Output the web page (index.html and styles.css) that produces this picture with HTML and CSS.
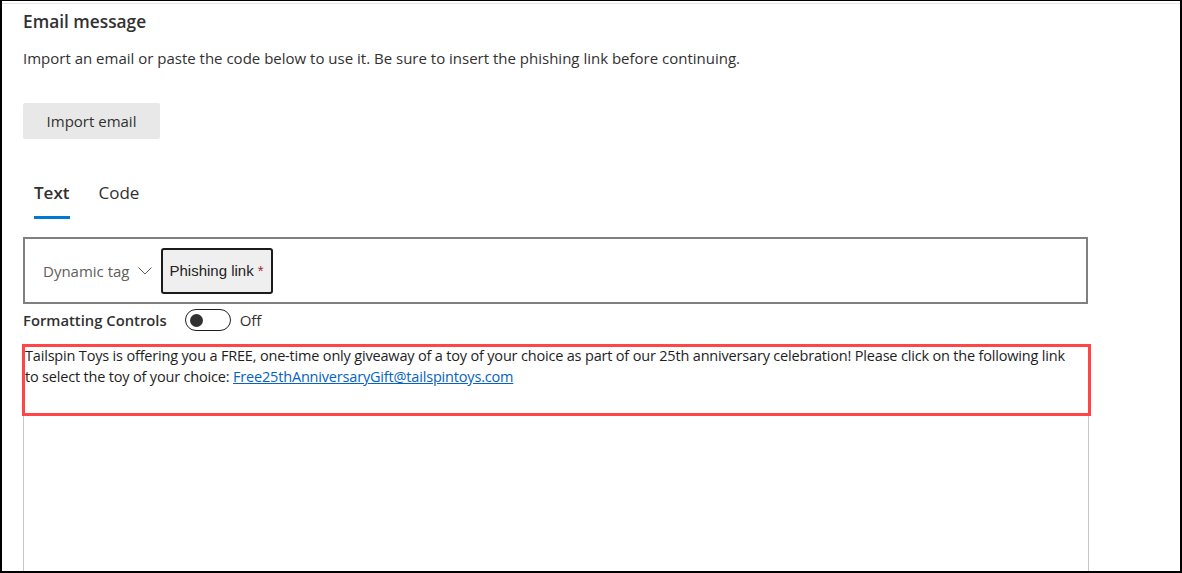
FILE: index.html
```html
<!DOCTYPE html>
<html>
<head>
<meta charset="utf-8">
<link rel="stylesheet" href="styles.css">
</head>
<body>
<div class="frame">
  <div class="topline"></div>
  <div class="content">
    <h1 class="title">Email message</h1>
    <p class="desc">Import an email or paste the code below to use it. Be sure to insert the phishing link before continuing.</p>
    <button class="import-btn">Import email</button>
    <div class="tabs">
      <div class="tab active">Text</div>
      <div class="tab">Code</div>
    </div>
    <div class="toolbar">
      <div class="dyn">Dynamic tag
        <svg class="chev" width="14" height="8" viewBox="0 0 14 8"><path d="M0.5 0.5 L7 7 L13.5 0.5" fill="none" stroke="#605e5c" stroke-width="1"/></svg>
      </div>
      <div class="phish">Phishing link <span class="req">*</span></div>
    </div>
    <div class="fmt">
      <span class="fmt-label">Formatting Controls</span>
      <span class="toggle"><span class="knob"></span></span>
      <span class="off">Off</span>
    </div>
    <div class="editor">
      <div class="highlight">
        <p class="body-text">Tailspin Toys is offering you a FREE, one-time only giveaway of a toy of your choice as part of our 25th anniversary celebration! Please click on the following link to&nbsp;select the toy of your choice: <a class="link" href="#">Free25thAnniversaryGift@tailspintoys.com</a></p>
      </div>
    </div>
  </div>
</div>
</body>
</html>
```

FILE: styles.css
```css
html, body {
  margin: 0;
  padding: 0;
  background: #fff;
}
.frame {
  box-sizing: border-box;
  width: 1182px;
  height: 573px;
  border-top: 1px solid #000;
  border-left: 2px solid #000;
  border-right: 2px solid #000;
  border-bottom: 2px solid #000;
  overflow: hidden;
  display: flex;
  flex-direction: column;
  font-family: "Open Sans", "Noto Sans", sans-serif;
  color: #323130;
}
.topline {
  margin-top: 2px;
  border-top: 1px solid #e6e6e6;
}
.content {
  padding-left: 21px;
  flex: 1;
  display: flex;
  flex-direction: column;
}
.title {
  margin: 6px 0 0 0;
  font-size: 17.3px;
  font-weight: 600;
  line-height: 24px;
  color: #323130;
}
.desc {
  margin: 14px 0 0 0;
  font-size: 15px;
  line-height: 20px;
  color: #323130;
}
.import-btn {
  align-self: flex-start;
  margin-top: 35px;
  width: 137px;
  height: 36px;
  border: none;
  border-radius: 2px;
  background: #e8e8e8;
  font-family: "Open Sans", sans-serif;
  font-size: 15px;
  font-weight: 500;
  color: #323130;
  padding: 0;
}
.tabs {
  display: flex;
  gap: 29px;
  margin-top: 42px;
  padding-left: 11px;
}
.tab {
  font-size: 17px;
  line-height: 24px;
  padding-bottom: 14px;
  color: #323130;
}
.tab.active {
  font-weight: 600;
  border-bottom: 3px solid #0078d4;
  padding-bottom: 11px;
}
.toolbar {
  box-sizing: border-box;
  margin-top: 18px;
  width: 1065px;
  height: 67px;
  border: 2px solid #808080;
  display: flex;
  align-items: center;
  padding-left: 18px;
}
.dyn {
  display: flex;
  align-items: center;
  font-size: 15px;
  color: #605e5c;
  gap: 8px;
}
.chev {
  margin-top: 1px;
}
.phish {
  box-sizing: border-box;
  margin-left: 9px;
  height: 46px;
  width: 112px;
  border: 2px solid #1b1b1b;
  border-radius: 3px;
  background: #efefef;
  display: flex;
  align-items: center;
  justify-content: center;
  font-family: "Liberation Sans", Arial, sans-serif;
  font-size: 15px;
  color: #222;
}
.req {
  color: #a4262c;
  margin-left: 4px;
}
.fmt {
  display: flex;
  align-items: center;
  height: 22px;
  margin-top: 5px;
}
.fmt-label {
  font-size: 14.8px;
  font-weight: 600;
  color: #323130;
}
.toggle {
  box-sizing: border-box;
  margin-left: 18px;
  width: 46px;
  height: 22px;
  border: 1px solid #201f1e;
  border-radius: 11px;
  display: flex;
  align-items: center;
  padding-left: 4px;
}
.knob {
  width: 13px;
  height: 13px;
  border-radius: 50%;
  background: #323130;
}
.off {
  margin-left: 9px;
  font-size: 15px;
  color: #323130;
}
.editor {
  flex: 1;
  margin-top: 13px;
  width: 1066px;
  box-sizing: border-box;
  border-left: 1px solid #c8c8c8;
  border-right: 1px solid #c8c8c8;
}
.highlight {
  box-sizing: border-box;
  margin-left: -2px;
  width: 1069px;
  height: 72px;
  border: 3px solid #ff4545;
}
.body-text {
  margin: -2px 0 0 0;
  font-family: "Open Sans", sans-serif;
  font-size: 14.5px;
  line-height: 21px;
  letter-spacing: -0.18px;
  color: #1e1e1e;
}
.link {
  color: #0563c1;
  text-decoration: underline;
}
```
